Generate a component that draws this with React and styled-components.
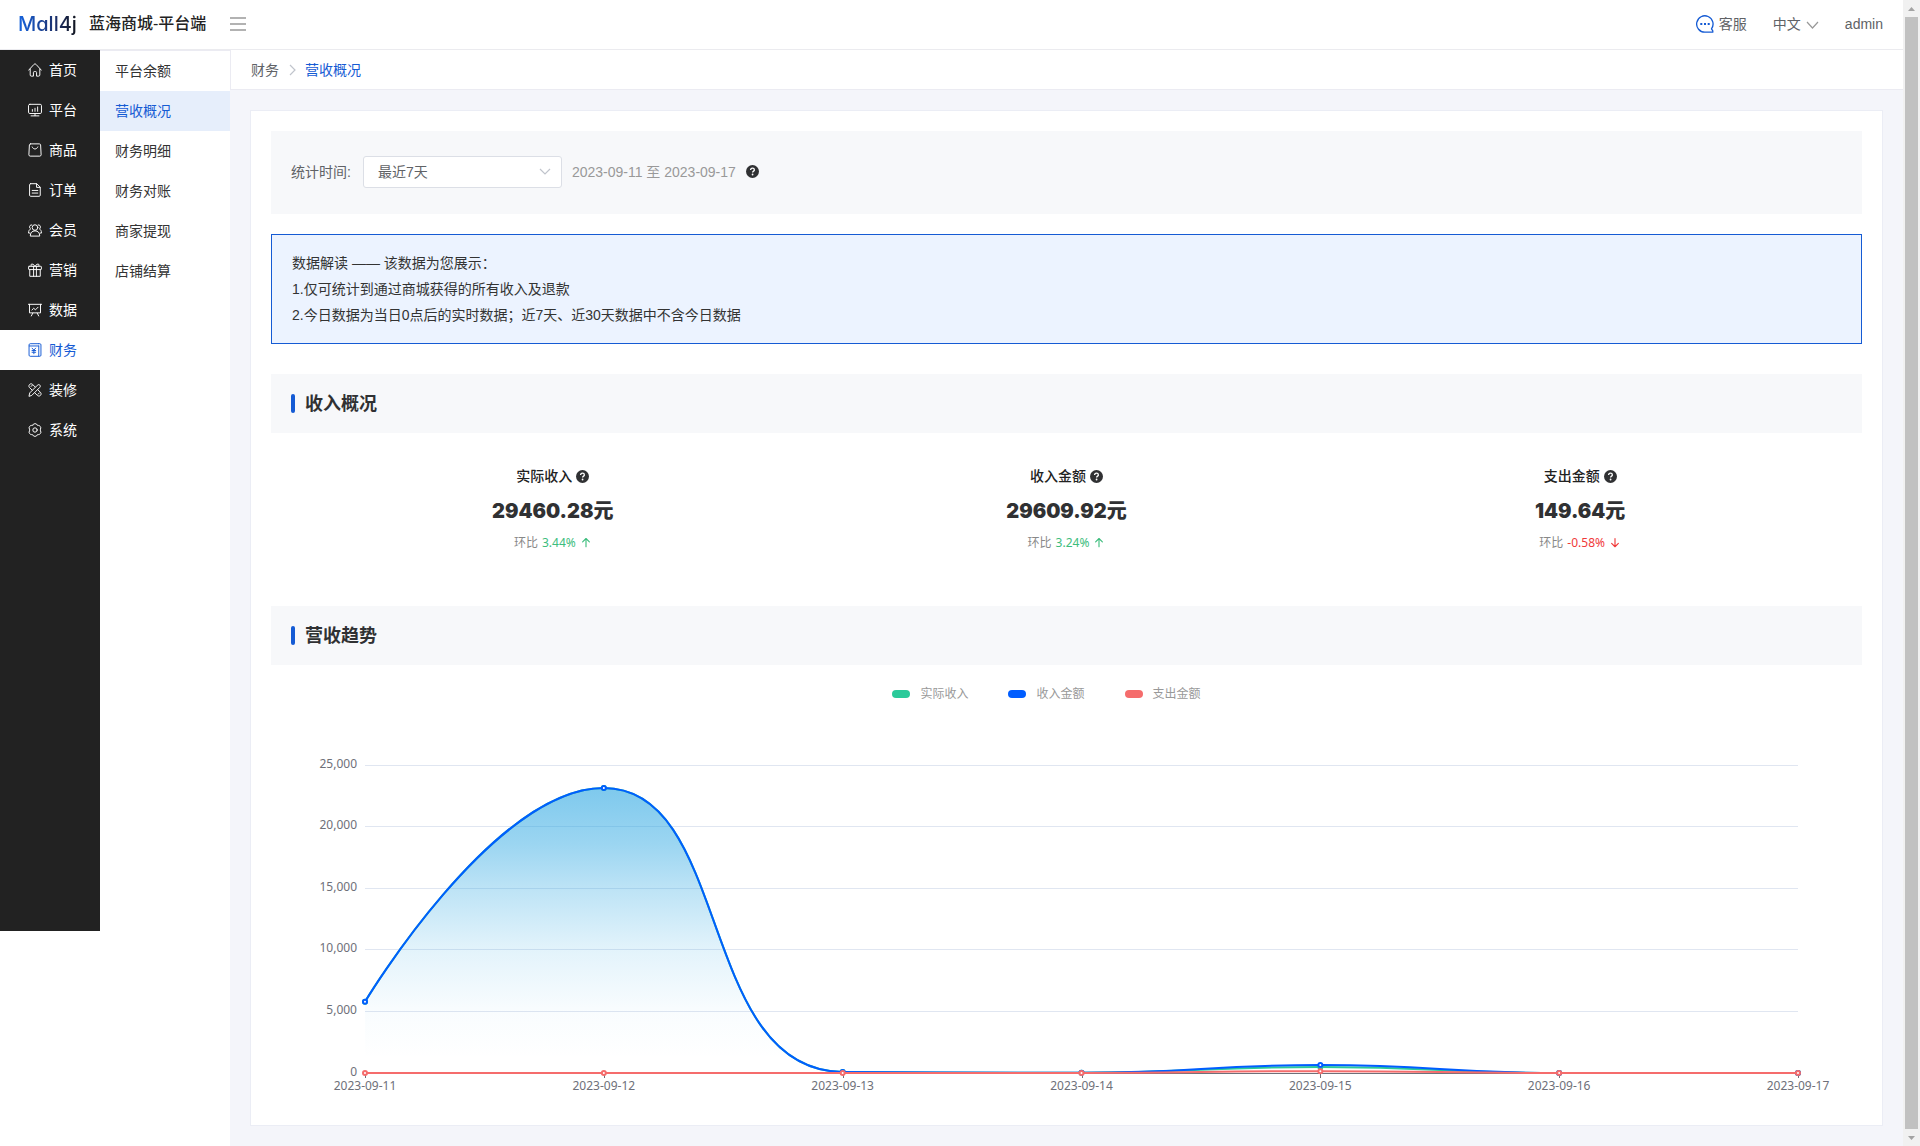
import React, { useLayoutEffect, useRef, useState } from "react";
import styled, { createGlobalStyle, css } from "styled-components";

const SANS = '"Liberation Sans", "Noto Sans CJK SC", sans-serif';
const LABEL = '"Noto Sans", "Noto Sans CJK SC", sans-serif';
const BLUE = "#155bd4";

const GlobalStyle = createGlobalStyle`
  *, *::before, *::after { box-sizing: border-box; }
  body {
    margin: 0;
    background: #fff;
    color: #333;
    font-family: ${SANS};
    font-size: 14px;
    line-height: 20px;
  }
  h1, h2, h3, p, ul, ol, dl, dd { margin: 0; padding: 0; }
  ul, ol { list-style: none; }
  a { color: inherit; text-decoration: none; }
  button { border: 0; padding: 0; background: none; font: inherit; color: inherit; cursor: pointer; }
  svg { display: block; flex: none; }
`;

/* ---------- shell ---------- */

const Page = styled.div`
  display: flex;
  min-height: 100vh;
`;

const Shell = styled.div`
  flex: 1;
  min-width: 0;
  display: flex;
  flex-direction: column;
`;

const Header = styled.header`
  display: flex;
  align-items: center;
  height: 50px;
  padding: 0 20px 2px 18px;
  border-bottom: 1px solid #ebebef;
`;

const Brand = styled.a`
  display: flex;
  align-items: center;
  gap: 9px;
`;

const Logo = styled.span`
  width: 62px;
  font: 500 20px/26px Inter, sans-serif;
  font-feature-settings: "cv11";
  color: transparent;
  background: linear-gradient(90deg, #1664e0, #1b2f6b 60%, #111);
  background-clip: text;
  -webkit-background-clip: text;
`;

const BrandTitle = styled.h1`
  font-size: 16px;
  font-weight: 500;
  line-height: 24px;
  color: #222;
`;

const MenuToggle = styled.button`
  margin-left: 24px;
  color: #999;
`;

const HeaderActions = styled.div`
  display: flex;
  align-items: center;
  gap: 26px;
  margin-left: auto;
  color: #606266;
`;

const HeaderButton = styled.button`
  display: flex;
  align-items: center;
  gap: 5px;
`;

const Body = styled.div`
  flex: 1;
  display: flex;
`;

const SideNav = styled.nav`
  flex: none;
  align-self: flex-start;
  width: 100px;
  min-height: 881px;
  background: #222;
`;

const SideLink = styled.a`
  display: flex;
  align-items: center;
  gap: 7px;
  height: 40px;
  padding-left: 28px;
  color: #fff;
  ${(p) => p.$active && css`
    color: ${BLUE};
    background: #fff;
  `}
`;

const SubNav = styled.nav`
  flex: none;
  width: 130px;
  border-top: 1px solid #ebebf2;
`;

const SubLink = styled.a`
  display: block;
  padding: 0 15px;
  line-height: 40px;
  color: ${(p) => (p.$active ? BLUE : "#333")};
  background: ${(p) => (p.$active ? "#e6eefb" : "transparent")};
`;

const Main = styled.main`
  flex: 1;
  min-width: 0;
  background: #f4f5fa;
`;

const Crumbs = styled.nav`
  display: flex;
  align-items: center;
  gap: 8px;
  height: 40px;
  padding: 0 20px;
  border-left: 1px solid #ebebf2;
  border-bottom: 1px solid #ebebf2;
  background: #fff;
  color: #666;
`;

const Crumb = styled.a`
  color: ${(p) => (p.$current ? BLUE : "#606266")};
`;

const Card = styled.div`
  margin: 20px;
  padding: 20px;
  border: 1px solid #ebedf5;
  background: #fff;
`;

/* ---------- filter and note ---------- */

const FilterBar = styled.form`
  display: flex;
  align-items: center;
  height: 83px;
  padding: 0 20px 2px;
  background: #f7f8fa;
  color: #606266;
`;

const SelectWrap = styled.div`
  display: grid;
  align-items: center;
  width: 199px;
  margin: 0 10px 0 12px;
  & > * { grid-area: 1 / 1; }
  & > svg {
    justify-self: end;
    margin-right: 11px;
    pointer-events: none;
    color: #c0c4cc;
  }
`;

const Select = styled.select`
  appearance: none;
  height: 32px;
  padding: 0 30px 0 14px;
  border: 1px solid #dcdfe6;
  border-radius: 3px;
  background: #fff;
  color: #606266;
  font: inherit;
`;

const DateRange = styled.span`
  margin-right: 10px;
  color: #999;
`;

const Note = styled.section`
  margin-top: 20px;
  padding: 15px 20px;
  border: 1px solid ${BLUE};
  background: #ecf3ff;
  line-height: 26px;
  color: #333;
`;

/* ---------- sections ---------- */

const SectionHead = styled.header`
  display: flex;
  align-items: center;
  gap: 10px;
  height: 59px;
  margin-top: ${(p) => p.$gap}px;
  padding: 0 20px;
  background: #f7f8fa;
  &::before {
    content: "";
    width: 4px;
    height: 19px;
    border-radius: 2px;
    background: ${BLUE};
  }
`;

const SectionTitle = styled.h2`
  font-size: 18px;
  font-weight: 700;
  line-height: 26px;
  color: #303133;
`;

const Stats = styled.dl`
  display: grid;
  grid-template-columns: repeat(3, 1fr);
  padding: 33px 25px 0;
  text-align: center;
`;

const StatName = styled.dt`
  display: flex;
  justify-content: center;
  align-items: center;
  gap: 4px;
  font-weight: 500;
  color: #222;
`;

const StatValue = styled.dd`
  margin-top: 10px;
  font: 900 20px/30px Inter, "Noto Sans CJK SC", sans-serif;
  color: #303133;
`;

const StatTrend = styled.dd`
  display: flex;
  justify-content: center;
  align-items: center;
  gap: 4px;
  margin-top: 8px;
  font: 12px/18px ${LABEL};
  color: #888;
`;

const Delta = styled.span`
  display: flex;
  align-items: center;
  gap: 4px;
  color: ${(p) => (p.$down ? "#f03a3a" : "#3dbd7d")};
`;

const Legend = styled.ul`
  display: flex;
  justify-content: center;
  gap: 40px;
  padding: 20px 40px 0 0;
`;

const LegendItem = styled.li`
  display: flex;
  align-items: center;
  gap: 10px;
  font: 12px/18px ${LABEL};
  color: #999;
  &::before {
    content: "";
    width: 18px;
    height: 8px;
    border-radius: 4px;
    background: ${(p) => p.$color};
  }
`;

const ChartBox = styled.figure`
  height: 402px;
  margin: 0;
  overflow: hidden;
`;

const AxisText = styled.text`
  font: 12px ${LABEL};
  fill: #6e7079;
  text-anchor: ${(p) => p.$anchor};
`;

/* ---------- scroll rail ---------- */

const Rail = styled.div`
  position: sticky;
  top: 0;
  flex: none;
  display: flex;
  flex-direction: column;
  align-items: center;
  width: 17px;
  height: 100vh;
  background: #f1f1f1;
  color: #a3a3a3;
  & > svg { height: 17px; }
`;

const Thumb = styled.div`
  flex: 1;
  width: 13px;
  background: #c1c1c1;
`;

/* ---------- icons ---------- */

const Icon = ({ size = 14, width = 1.1, children }) => (
  <svg width={size} height={size} viewBox="0 0 16 16" fill="none" stroke="currentColor"
    strokeWidth={width} strokeLinecap="round" strokeLinejoin="round" aria-hidden="true">
    {children}
  </svg>
);

const icons = {
  home: (
    <>
      <path d="M.8 8.200 6.800 1.600c.7-.7 1.700-.7 2.400 0l6 6.600" />
      <path d="M2.500 7v6.700c0 .8.500 1.300 1.300 1.300h2.400v-4.200c0-.6.400-1 1-1h1.600c.6 0 1 .4 1 1V15h2.400c.8 0 1.300-.5 1.300-1.300V7" />
    </>
  ),
  platform: (
    <>
      <rect x=".6" y="1.500" width="14.800" height="10.500" rx="1.500" />
      <path d="M5 7.500v2M8 6v3.500M11 4.500v5M8 12v2.500M3.500 14.700h9" />
    </>
  ),
  goods: (
    <>
      <path d="M3 1h10c.8 0 1.300.5 1.400 1.200L15 13.500c0 .9-.6 1.500-1.500 1.500h-11C1.600 15 1 14.400 1 13.500l.6-11.300C1.700 1.500 2.200 1 3 1Z" />
      <path d="M4.800 4.500C5.500 6 6.600 6.800 8 6.800S10.500 6 11.200 4.500" />
    </>
  ),
  order: (
    <>
      <path d="M3 .8h7l4 4v9.200c0 .7-.5 1.200-1.200 1.200H3c-.7 0-1.200-.5-1.200-1.200V2C1.800 1.300 2.300.8 3 .8Z" />
      <path d="M9.800 1v4h4M4.800 8.500h6.400M4.800 11.500h6.400" />
    </>
  ),
  member: (
    <>
      <circle cx="8" cy="5.200" r="3.200" />
      <path d="M2.600 14.500c0-3.300 2-5.500 5.400-5.500s5.400 2.200 5.400 5.500Z" />
      <path d="M4.300 2.200C2.700 2 1.700 3.200 1.800 4.700c.1 1 .5 1.700 1.200 2.100C1.500 7.500.6 9 .6 11.500h1.600M11.700 2.200c1.600-.2 2.600 1 2.500 2.500-.1 1-.5 1.700-1.200 2.100 1.500.7 2.400 2.200 2.400 4.700h-1.600" />
    </>
  ),
  gift: (
    <>
      <rect x=".7" y="3.800" width="14.600" height="3.700" rx=".6" />
      <path d="M2 7.500v7.700h12V7.500M6.400 3.800v11.400M9.600 3.800v11.400M8 3.800C6.500.8 3.500.5 3.300 2.300c0 .8.700 1.500 1.500 1.500M8 3.800c1.500-3 4.500-3.300 4.700-1.500 0 .8-.7 1.500-1.500 1.500" />
    </>
  ),
  data: (
    <>
      <path d="M.5 1.500h15M1.700 1.500v9.800h12.600V1.500M4.500 8l2-2 2 1.800 3-3M5.500 11.500l-1.700 3.300M10.500 11.500l1.700 3.300" />
    </>
  ),
  finance: (
    <>
      <path d="M12.300 3.400v11.800H2.500c-.7 0-1.300-.6-1.300-1.300V2.100C1.200 1.400 1.800.8 2.500.8h9.800" />
      <path d="M1.500 3.400h10.800M12.300.8h1.200c.8 0 1.300.5 1.300 1.300v11.800c0 .8-.5 1.300-1.300 1.300h-1.200M4.700 5.900l2 2.300 2-2.300M4.600 8.600h4.200M4.600 10.600h4.200M6.700 8.300v4" />
    </>
  ),
  design: (
    <>
      <path d="M1.200 14.800 2 11.300l8.700-8.700c1-1 2-1 2.800-.2s.8 1.800-.2 2.800L4.600 13.900Z" />
      <path d="M4.800 8.200 1.500 5c-.8-1.200-.5-2.600.4-3.400s2.200-1 3.300 0l3 3M11.300 7.800l3 2.900c1 1.200.8 2.600-.1 3.500s-2.300 1-3.400.1L7.900 11.400" />
      <path d="m3.500 4 1.500-1.500M11.500 12.800l1.500-1.500" />
    </>
  ),
  system: (
    <>
      <path d="M6.200 1.300c.5-.7 3.100-.7 3.600 0l.7 1.200 1.500.3c1.200-.2 2.900 1.900 2.600 2.900L14.200 7v2l.6 1.300c.2 1-1.400 3.100-2.600 2.900l-1.700.3-.7 1.200c-.5.7-3.100.7-3.600 0l-.7-1.200-1.700-.3C2.600 13.400 1 11.300 1.200 10.300L1.800 9V7l-.6-1.300C1 4.700 2.600 2.600 3.800 2.800l1.700-.3Z" />
      <circle cx="8" cy="8" r="2.500" />
    </>
  ),
};

const Help = () => (
  <svg width="13" height="13" viewBox="0 0 16 16" aria-hidden="true">
    <circle cx="8" cy="8" r="8" fill="#303133" />
    <path d="M5.700 6.200C5.700 4.700 6.600 3.900 8 3.900s2.300.8 2.300 2.100c0 1.500-2.200 1.600-2.200 3.300" fill="none" stroke="#fff" strokeWidth="1.600" />
    <circle cx="8.100" cy="11.700" r="1.100" fill="#fff" />
  </svg>
);

const Chevron = ({ w, h, d, color }) => (
  <svg width={w} height={h} viewBox={`0 0 ${w} ${h}`} fill="none" stroke={color || "currentColor"} strokeWidth="1.200" aria-hidden="true">
    <path d={d} />
  </svg>
);

const TrendArrow = ({ down }) => (
  <Icon size={12} width={1.500}>
    <path d={down ? "M8 2v11M3.500 8.500 8 13l4.500-4.500" : "M8 13V2M3.500 6.500 8 2l4.500 4.500"} />
  </Icon>
);

/* ---------- data ---------- */

const NAV = [
  ["首页", "home"], ["平台", "platform"], ["商品", "goods"], ["订单", "order"], ["会员", "member"],
  ["营销", "gift"], ["数据", "data"], ["财务", "finance"], ["装修", "design"], ["系统", "system"],
];
const SUBNAV = ["平台余额", "营收概况", "财务明细", "财务对账", "商家提现", "店铺结算"];
const STATS = [
  { name: "实际收入", value: "29460.28元", delta: "3.44%" },
  { name: "收入金额", value: "29609.92元", delta: "3.24%" },
  { name: "支出金额", value: "149.64元", delta: "-0.58%", down: true },
];
const DATES = ["2023-09-11", "2023-09-12", "2023-09-13", "2023-09-14", "2023-09-15", "2023-09-16", "2023-09-17"];
const SERIES = [
  { name: "实际收入", color: "#2bca9a", values: [5780, 23130, 80, 20, 490, 0, 0] },
  { name: "收入金额", color: "#005dff", values: [5780, 23130, 80, 20, 640, 0, 0] },
  { name: "支出金额", color: "#f56c6c", values: [0, 0, 0, 0, 150, 0, 0] },
];
const TICKS = [25000, 20000, 15000, 10000, 5000, 0];

/* ---------- chart ---------- */

const clamp = (v, a, b) => Math.max(Math.min(a, b), Math.min(v, Math.max(a, b)));

// Smooth line whose control points never leave the span of their segment.
function smoothPath(pts, smooth = 0.5) {
  let out = `M${pts[0][0]} ${pts[0][1]}`;
  let cp0 = pts[0];
  for (let i = 1; i < pts.length; i++) {
    const p = pts[i];
    const prev = pts[i - 1];
    const next = pts[i + 1];
    let cp1 = p;
    let nextCp = p;
    if (next) {
      const lenPrev = Math.hypot(p[0] - prev[0], p[1] - prev[1]);
      const lenNext = Math.hypot(next[0] - p[0], next[1] - p[1]);
      const ratio = lenNext / (lenNext + lenPrev);
      nextCp = [0, 1].map((k) => clamp(p[k] + (next[k] - prev[k]) * smooth * ratio, next[k], p[k]));
      cp1 = [0, 1].map((k) => clamp(p[k] - ((nextCp[k] - p[k]) * lenPrev) / lenNext, prev[k], p[k]));
      nextCp = [0, 1].map((k) => p[k] + ((p[k] - cp1[k]) * lenNext) / lenPrev);
    }
    out += `C${cp0[0]} ${cp0[1]} ${cp1[0]} ${cp1[1]} ${p[0]} ${p[1]}`;
    cp0 = nextCp;
  }
  return out;
}

function TrendChart() {
  const box = useRef(null);
  const [width, setWidth] = useState(1591);
  useLayoutEffect(() => {
    const el = box.current;
    const measure = () => setWidth(el.clientWidth);
    measure();
    const observer = new ResizeObserver(measure);
    observer.observe(el);
    return () => observer.disconnect();
  }, []);

  const left = 94;
  const right = width - 64;
  const top = 62;
  const bottom = 370;
  const x = (i) => left + ((right - left) * i) / (DATES.length - 1);
  const y = (v) => bottom - ((bottom - top) * v) / 25000;
  const lines = SERIES.map((s) => ({ ...s, pts: s.values.map((v, i) => [x(i), y(v)]) }));
  const income = lines[1];

  return (
    <ChartBox ref={box}>
      <svg width={width} height="402" role="img" aria-label="营收趋势">
        <defs>
          <linearGradient id="area" x1="0" x2="0" y1="0" y2="1">
            <stop offset="0" stopColor="#28a5e1" stopOpacity=".6" />
            <stop offset=".2" stopColor="#28a5e1" stopOpacity=".46" />
            <stop offset=".35" stopColor="#28a5e1" stopOpacity=".31" />
            <stop offset=".57" stopColor="#28a5e1" stopOpacity=".13" />
            <stop offset=".78" stopColor="#28a5e1" stopOpacity=".03" />
            <stop offset=".95" stopColor="#28a5e1" stopOpacity="0" />
          </linearGradient>
        </defs>
        {TICKS.map((t) => (
          <g key={t}>
            <line x1={left} x2={right} y1={Math.floor(y(t)) + 0.5} y2={Math.floor(y(t)) + 0.5} stroke={t ? "#e0e6f1" : "#6e7079"} />
            <AxisText $anchor="end" x={left - 8} y={Math.floor(y(t)) + 3}>{t.toLocaleString("en-US")}</AxisText>
          </g>
        ))}
        {DATES.map((d, i) => (
          <g key={d}>
            <line x1={Math.round(x(i)) + 0.5} x2={Math.round(x(i)) + 0.5} y1={bottom} y2={bottom + 5} stroke="#6e7079" />
            <AxisText $anchor="middle" x={x(i)} y={bottom + 17}>{d}</AxisText>
          </g>
        ))}
        <path d={`${smoothPath(income.pts)}L${right} ${bottom}L${left} ${bottom}Z`} fill="url(#area)" />
        {lines.map((l) => (
          <g key={l.name} stroke={l.color} strokeWidth="2">
            <path d={smoothPath(l.pts)} fill="none" />
            {l.pts.map((p) => <circle key={p[0]} cx={p[0]} cy={p[1]} r="2" fill="#fff" />)}
          </g>
        ))}
      </svg>
    </ChartBox>
  );
}

/* ---------- page ---------- */

export default function App() {
  return (
    <>
      <GlobalStyle />
      <Page>
        <Shell>
          <Header>
            <Brand href="#">
              <Logo>Mall4j</Logo>
              <BrandTitle>蓝海商城-平台端</BrandTitle>
            </Brand>
            <MenuToggle type="button" aria-label="菜单">
              <svg width="16" height="14" viewBox="0 0 16 14" stroke="currentColor" strokeWidth="1.400" aria-hidden="true">
                <path d="M0 1h16M0 7h16M0 13h16" />
              </svg>
            </MenuToggle>
            <HeaderActions>
              <HeaderButton type="button">
                <svg width="18" height="18" viewBox="0 0 18 18" fill="none" stroke={BLUE} strokeWidth="1.300" aria-hidden="true">
                  <path d="M15.500 13.800A8.200 8.200 0 1 0 9 17.200h7.800v-1.400Z" strokeLinejoin="round" />
                  <path d="M4.300 9h2M8 9h2M11.700 9h2" strokeWidth="2" />
                </svg>
                客服
              </HeaderButton>
              <HeaderButton type="button">
                中文
                <Chevron w={13} h={10} d="M1 3l5.500 6L12 3" color="#999" />
              </HeaderButton>
              <HeaderButton type="button">admin</HeaderButton>
            </HeaderActions>
          </Header>
          <Body>
            <SideNav aria-label="主导航">
              {NAV.map(([label, icon]) => (
                <SideLink key={label} href="#" $active={label === "财务"}>
                  <Icon>{icons[icon]}</Icon>
                  {label}
                </SideLink>
              ))}
            </SideNav>
            <SubNav aria-label="财务">
              {SUBNAV.map((label) => (
                <SubLink key={label} href="#" $active={label === "营收概况"}>{label}</SubLink>
              ))}
            </SubNav>
            <Main>
              <Crumbs aria-label="位置">
                <Crumb href="#">财务</Crumb>
                <Chevron w={10} h={12} d="M3 1l5 5-5 5" color="#c0c4cc" />
                <Crumb href="#" $current>营收概况</Crumb>
              </Crumbs>
              <Card>
                <FilterBar>
                  <label htmlFor="period">统计时间:</label>
                  <SelectWrap>
                    <Select id="period" defaultValue="7">
                      <option value="7">最近7天</option>
                    </Select>
                    <Chevron w={12} h={7} d="M1 1l5 5 5-5" />
                  </SelectWrap>
                  <DateRange>2023-09-11 至 2023-09-17</DateRange>
                  <Help />
                </FilterBar>
                <Note>
                  <p>数据解读 —— 该数据为您展示：</p>
                  <p>1.仅可统计到通过商城获得的所有收入及退款</p>
                  <p>2.今日数据为当日0点后的实时数据；近7天、近30天数据中不含今日数据</p>
                </Note>
                <SectionHead $gap={30}><SectionTitle>收入概况</SectionTitle></SectionHead>
                <Stats>
                  {STATS.map((s) => (
                    <div key={s.name}>
                      <StatName>{s.name}<Help /></StatName>
                      <StatValue>{s.value}</StatValue>
                      <StatTrend>
                        环比
                        <Delta $down={s.down}>{s.delta}<TrendArrow down={s.down} /></Delta>
                      </StatTrend>
                    </div>
                  ))}
                </Stats>
                <SectionHead $gap={54}><SectionTitle>营收趋势</SectionTitle></SectionHead>
                <Legend>
                  {SERIES.map((s) => <LegendItem key={s.name} $color={s.color}>{s.name}</LegendItem>)}
                </Legend>
                <TrendChart />
              </Card>
            </Main>
          </Body>
        </Shell>
        <Rail aria-hidden="true">
          <svg width="17" height="17" viewBox="0 0 17 17" fill="currentColor"><path d="M5 11l3.500-4 3.500 4Z" /></svg>
          <Thumb />
          <svg width="17" height="17" viewBox="0 0 17 17" fill="currentColor"><path d="M5 7l3.500 4L12 7Z" /></svg>
        </Rail>
      </Page>
    </>
  );
}
